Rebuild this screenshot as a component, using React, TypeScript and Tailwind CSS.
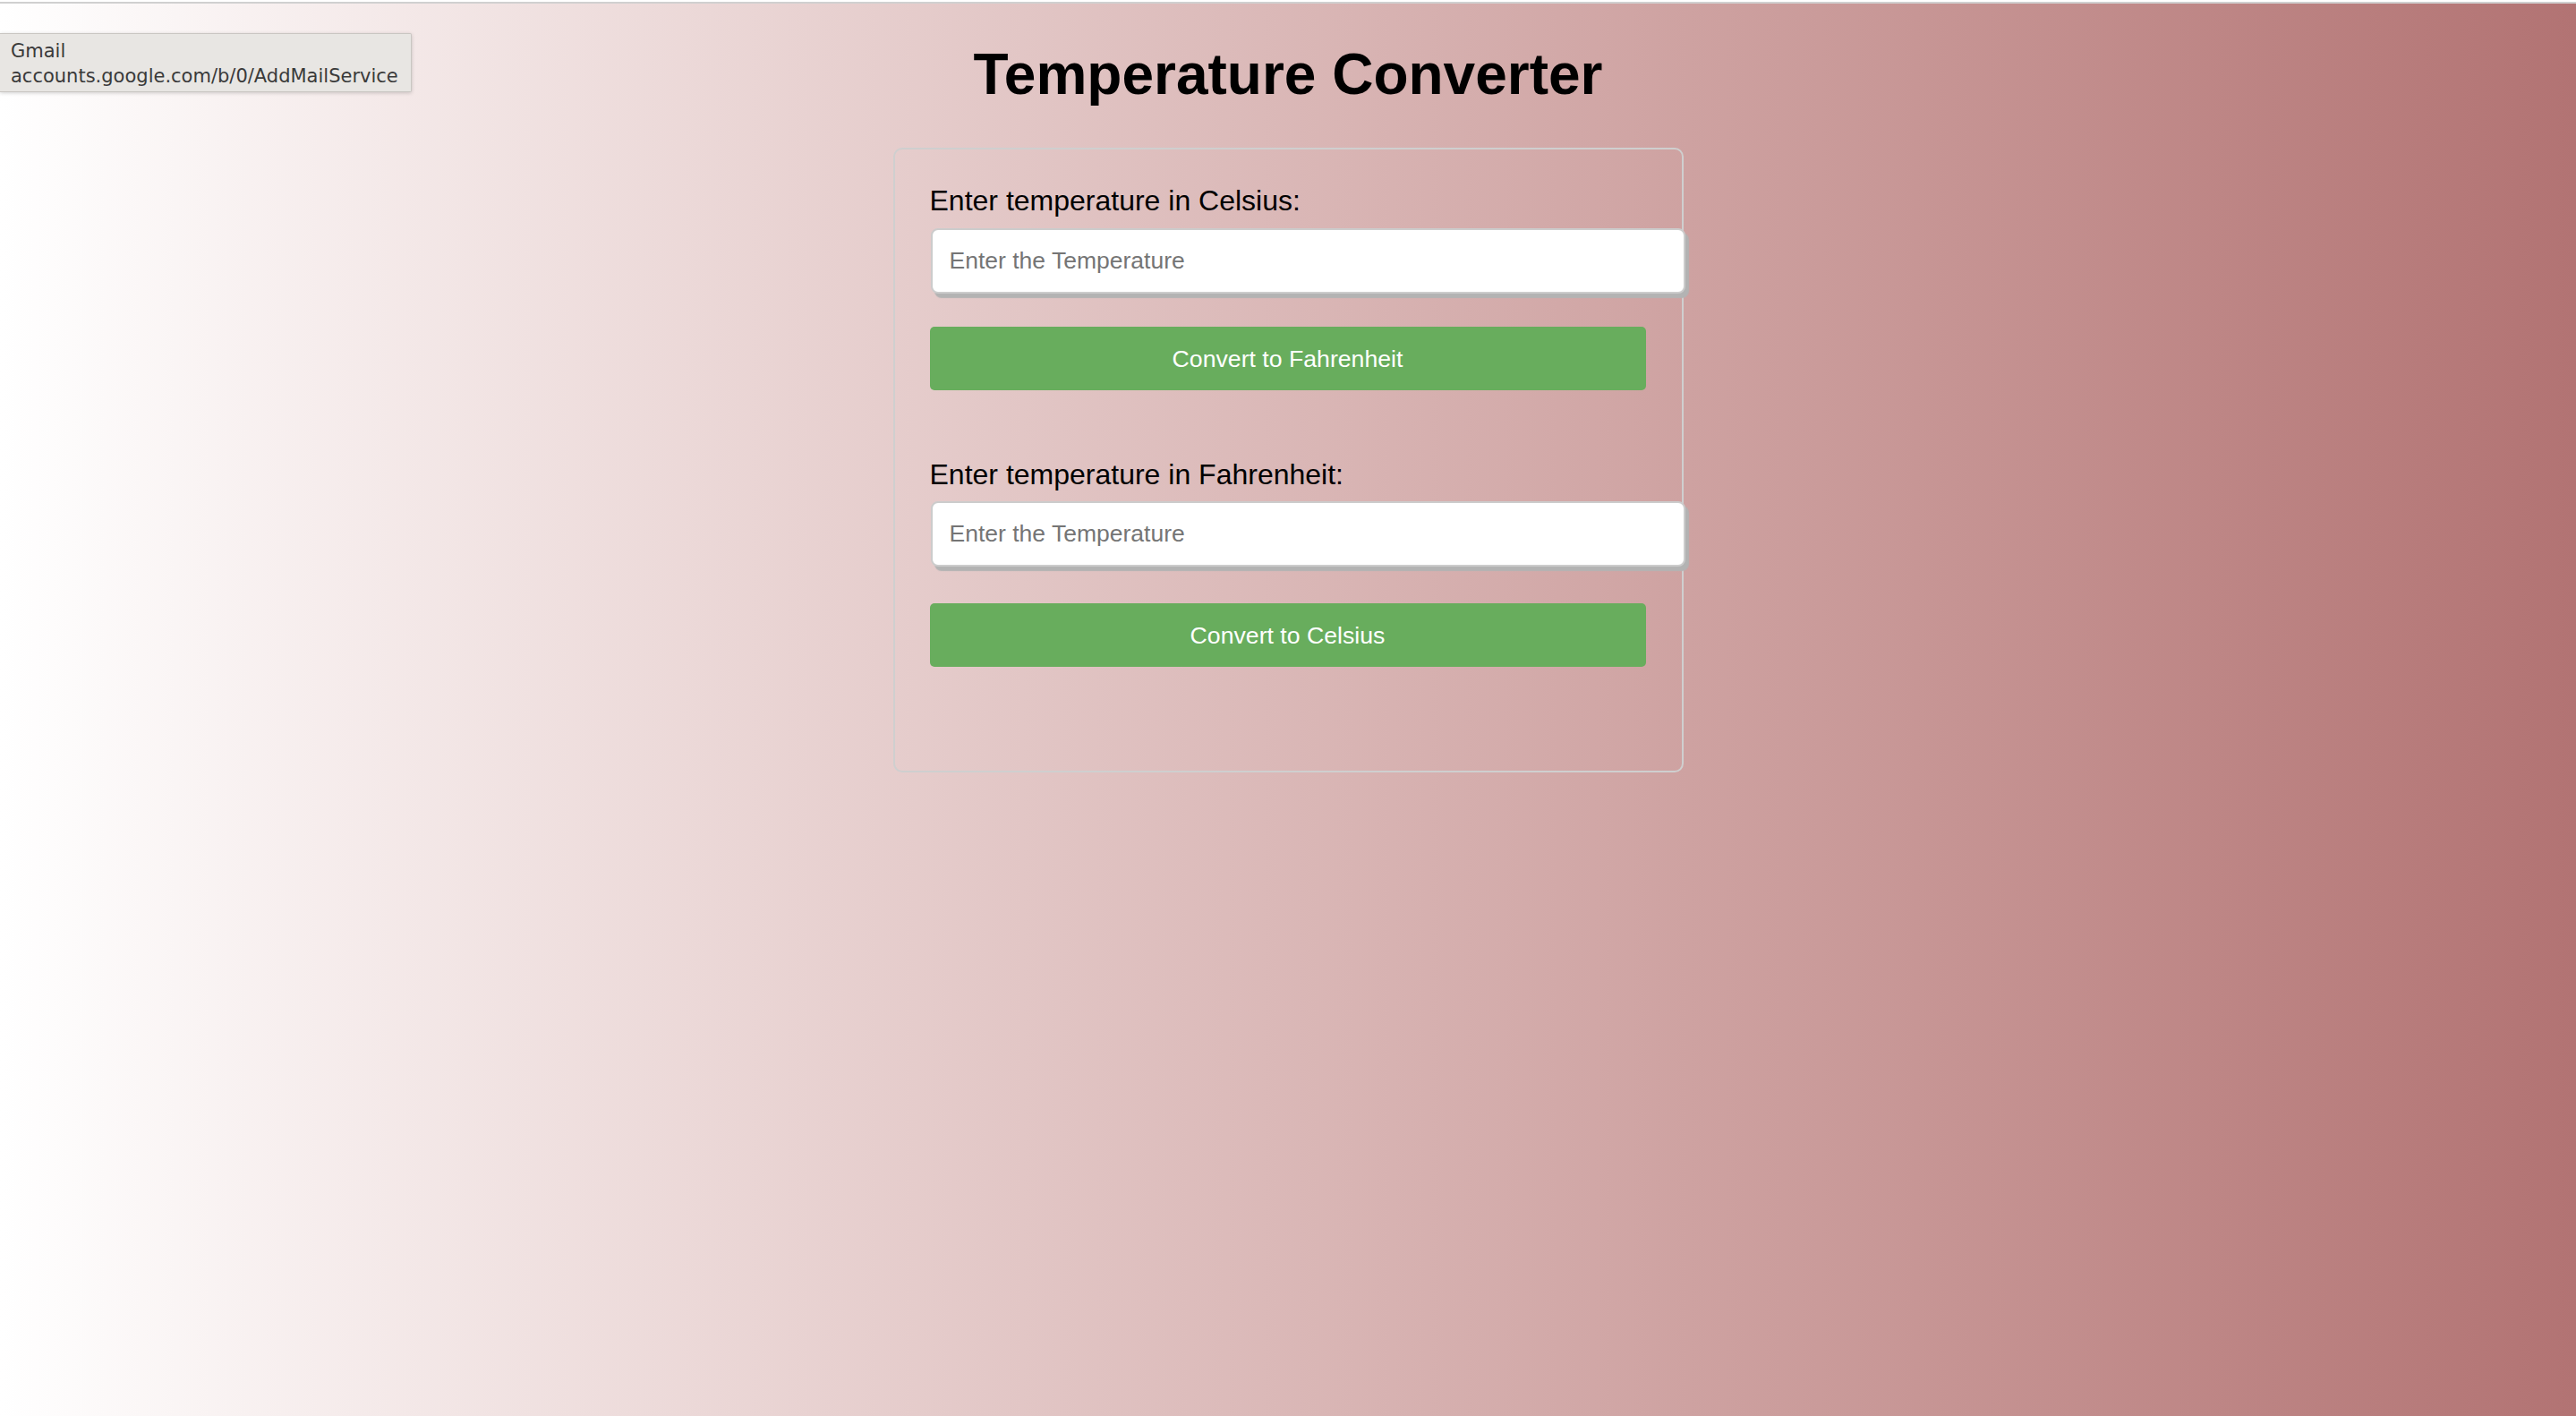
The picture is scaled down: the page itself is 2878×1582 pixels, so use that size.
export default function App() {
  return (
    <div className="relative min-h-screen bg-gradient-to-r from-white to-[#b27373] font-['Liberation_Sans',Arial,sans-serif]">
      {/* browser chrome edge */}
      <div className="h-[2px] bg-white" />
      <div className="h-[2px] bg-[#d0d0d0]" />

      {/* ── HEADER ─────────────────────────────── */}
      <h1 className="mt-[42px] text-center text-[64px] font-bold leading-[74px] text-black">
        Temperature Converter
      </h1>

      {/* ── CONVERTER CARD ─────────────────────── */}
      <div className="mx-auto mt-[45px] w-[883px] rounded-[10px] border-2 border-[#cfcfcf] pl-[39px] pr-[40px] pt-[39px] pb-[116px]">
        <label className="block text-[32px] leading-[37px] text-black">
          Enter temperature in Celsius:
        </label>
        <input
          type="text"
          placeholder="Enter the Temperature"
          className="mt-[12px] ml-[1px] block h-[73px] w-[843px] rounded-[8px] border-2 border-[#cccccc] bg-white pl-[19px] text-[26.5px] text-black shadow-[4px_5px_1px_#b3b3b3] outline-none placeholder:text-[#757575]"
        />
        <button className="mt-[37px] block h-[71px] w-full rounded-[5px] bg-[#68ad5d] text-[26.67px] text-white">
          Convert to Fahrenheit
        </button>

        <label className="mt-[76px] block text-[32px] leading-[37px] text-black">
          Enter temperature in Fahrenheit:
        </label>
        <input
          type="text"
          placeholder="Enter the Temperature"
          className="mt-[11px] ml-[1px] block h-[73px] w-[843px] rounded-[8px] border-2 border-[#cccccc] bg-white pl-[19px] text-[26.5px] text-black shadow-[4px_5px_1px_#b3b3b3] outline-none placeholder:text-[#757575]"
        />
        <button className="mt-[41px] block h-[71px] w-full rounded-[5px] bg-[#68ad5d] text-[26.67px] text-white">
          Convert to Celsius
        </button>
      </div>

      {/* link hover tooltip */}
      <div className="absolute left-0 top-[37px] w-[460px] rounded-r-[2px] border border-l-0 border-[#c9c6c2] bg-[#e8e6e3] pt-[5px] pb-[3px] pl-[12px] font-['DejaVu_Sans',sans-serif] text-[21px] leading-[28px] text-[#3a3a3a] shadow-[0_1px_4px_rgba(0,0,0,0.18)]">
        <div>Gmail</div>
        <div>accounts.google.com/b/0/AddMailService</div>
      </div>
    </div>
  );
}
